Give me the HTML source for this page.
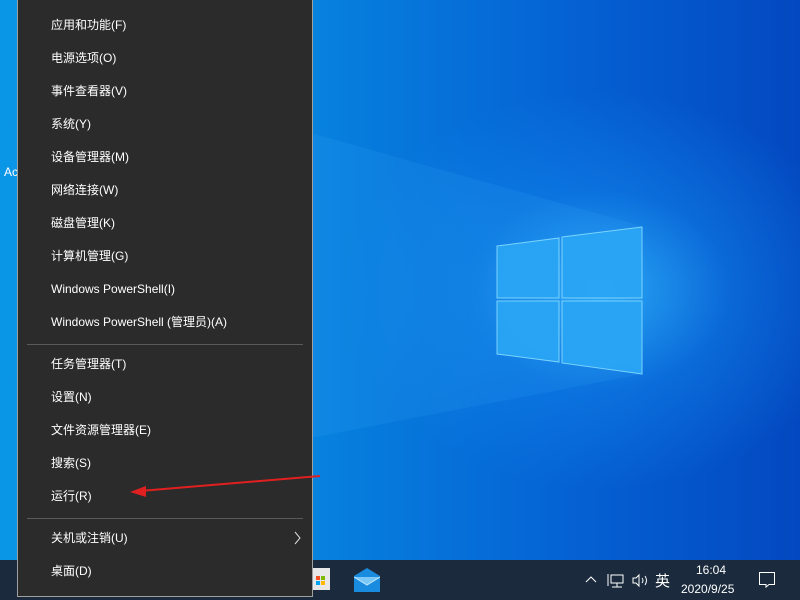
<!DOCTYPE html>
<html><head><meta charset="utf-8"><style>
*{margin:0;padding:0;box-sizing:border-box}
body{width:800px;height:600px;overflow:hidden;position:relative;font-family:"Liberation Sans","Noto Sans CJK SC",sans-serif;
background:radial-gradient(ellipse 260px 200px at 600px 290px,#2aa6f5 0%,rgba(20,140,240,0.4) 50%,rgba(0,0,0,0) 100%),linear-gradient(90deg,#0a96e6 0%,#0786e0 35%,#0563d4 70%,#0348c0 100%)}
#menu{position:absolute;left:17px;top:-1px;width:296px;height:598px;background:#2b2b2b;border:1px solid #a0a0a0}
.it{position:absolute;left:33px;color:#fff;font-size:12px;line-height:14px}
.sep{position:absolute;left:9px;width:276px;height:1px;background:#5a5a5a}
#tb{position:absolute;left:0;top:560px;width:800px;height:40px;background:#1b2b3d}
.tr{position:absolute;color:#fff;font-size:12px}
</style></head><body>
<svg style="position:absolute;left:0;top:0" width="800" height="560">
<polygon points="300,130 642,226 642,374 300,440" fill="#3fb4ff" opacity="0.12"/>
<g fill="#2aa5f5" stroke="#7fd8ff" stroke-width="1" opacity="0.95">
<polygon points="497,246 559,238 559,298 497,298"/>
<polygon points="562,237 642,227 642,298 562,298"/>
<polygon points="497,301 559,301 559,362 497,354"/>
<polygon points="562,301 642,301 642,374 562,363"/>
</g>
</svg>
<div style="position:absolute;left:4px;top:165px;color:#fff;font-size:12px">Ac</div>
<div id="tb">
<div style="position:absolute;left:310px;top:8px;width:20px;height:22px;background:#e8e8e8"></div>
<div style="position:absolute;left:316px;top:16px;width:4px;height:4px;background:#f25022"></div>
<div style="position:absolute;left:321px;top:16px;width:4px;height:4px;background:#7fba00"></div>
<div style="position:absolute;left:316px;top:21px;width:4px;height:4px;background:#00a4ef"></div>
<div style="position:absolute;left:321px;top:21px;width:4px;height:4px;background:#ffb900"></div>
<svg style="position:absolute;left:354px;top:8px" width="26" height="24"><polygon points="0,8 13,0 26,8 26,24 0,24" fill="#1a8ce0"/><polyline points="0,9 13,17 26,9" fill="#7cc8f8" stroke="#bfe6ff" stroke-width="1"/></svg>
<svg style="position:absolute;left:584px;top:12px" width="100" height="18" fill="none" stroke="#fff" stroke-width="1">
<polyline points="2,10 7,5 12,10"/>
<rect x="27" y="3" width="12" height="8"/><line x1="24" y1="2" x2="24" y2="14"/><line x1="33" y1="11" x2="33" y2="15"/><line x1="28" y1="15" x2="38" y2="15"/>
<polygon points="49,6 52,6 55,3 55,14 52,11 49,11"/><path d="M58,6 Q60,8.5 58,11 M61,4 Q64,8.5 61,13"/>
</svg>
<div class="tr" style="left:655px;top:10px;font-size:15px">英</div>
<div class="tr" style="left:696px;top:3px">16:04</div>
<div class="tr" style="left:681px;top:22px">2020/9/25</div>
<svg style="position:absolute;left:758px;top:10px" width="20" height="20" fill="none" stroke="#fff" stroke-width="1"><path d="M1.5,2.5 H16.5 V14.5 H11 L8,17 L8,14.5 H1.5 Z"/></svg>
</div>
<div id="menu">
<div class="it" style="top:18px">应用和功能(F)</div>
<div class="it" style="top:51px">电源选项(O)</div>
<div class="it" style="top:84px">事件查看器(V)</div>
<div class="it" style="top:117px">系统(Y)</div>
<div class="it" style="top:150px">设备管理器(M)</div>
<div class="it" style="top:183px">网络连接(W)</div>
<div class="it" style="top:216px">磁盘管理(K)</div>
<div class="it" style="top:249px">计算机管理(G)</div>
<div class="it" style="top:282px">Windows PowerShell(I)</div>
<div class="it" style="top:315px">Windows PowerShell (管理员)(A)</div>
<div class="sep" style="top:344px"></div>
<div class="it" style="top:357px">任务管理器(T)</div>
<div class="it" style="top:390px">设置(N)</div>
<div class="it" style="top:423px">文件资源管理器(E)</div>
<div class="it" style="top:456px">搜索(S)</div>
<div class="it" style="top:489px">运行(R)</div>
<div class="sep" style="top:518px"></div>
<div class="it" style="top:531px">关机或注销(U)</div>
<svg style="position:absolute;left:276px;top:531px" width="8" height="14" fill="none" stroke="#ddd" stroke-width="1"><polyline points="1,1 6,7 1,13"/></svg>
<div class="it" style="top:564px">桌面(D)</div>
</div>
<svg style="position:absolute;left:0;top:0" width="800" height="560">
<line x1="320" y1="476" x2="140" y2="491" stroke="#e02020" stroke-width="2"/>
<polygon points="130,492 146,486 146,497" fill="#e02020"/>
</svg>
</body></html>
